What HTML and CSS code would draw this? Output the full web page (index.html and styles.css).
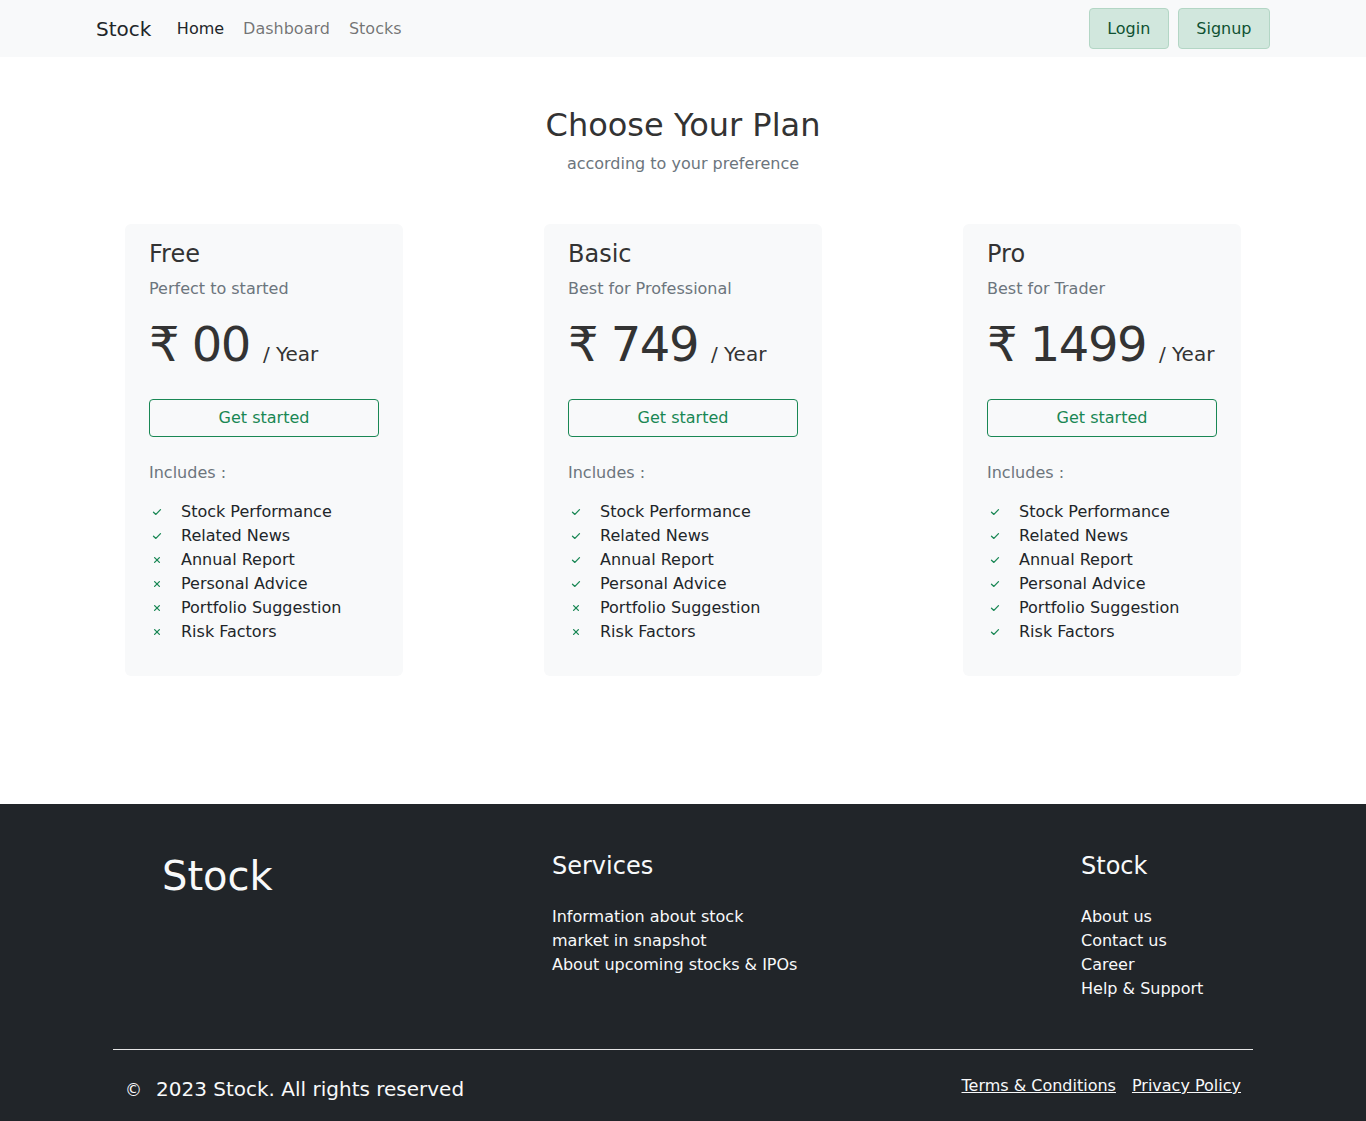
FILE: index.html
```html
<!DOCTYPE html>
<html lang="en">
<head>
<meta charset="utf-8">
<title>Stock - Plans</title>
<link rel="stylesheet" href="styles.css">
</head>
<body>
<nav class="navbar">
  <div class="nav-left">
    <a class="brand" href="#">Stock</a>
    <a class="nav-link active" href="#">Home</a>
    <a class="nav-link" href="#">Dashboard</a>
    <a class="nav-link" href="#">Stocks</a>
  </div>
  <div class="nav-right">
    <button class="btn-soft">Login</button>
    <button class="btn-soft">Signup</button>
  </div>
</nav>

<main class="plans">
  <header class="plans-head">
    <h2 class="plans-title">Choose Your Plan</h2>
    <p class="plans-sub">according to your preference</p>
  </header>

  <div class="cards">
    <div class="card">
      <h3 class="card-title">Free</h3>
      <p class="card-sub">Perfect to started</p>
      <div class="price"><span class="amount">₹ 00</span><span class="per">/ Year</span></div>
      <button class="btn-outline">Get started</button>
      <p class="includes">Includes :</p>
      <ul class="features">
        <li><svg class="ic" viewBox="0 0 10 10"><polyline points="1.5,5.2 3.9,7.4 8.5,2.6"/></svg>Stock Performance</li>
        <li><svg class="ic" viewBox="0 0 10 10"><polyline points="1.5,5.2 3.9,7.4 8.5,2.6"/></svg>Related News</li>
        <li><svg class="ic" viewBox="0 0 10 10"><path d="M2.6 2.6L7.4 7.4M7.4 2.6L2.6 7.4"/></svg>Annual Report</li>
        <li><svg class="ic" viewBox="0 0 10 10"><path d="M2.6 2.6L7.4 7.4M7.4 2.6L2.6 7.4"/></svg>Personal Advice</li>
        <li><svg class="ic" viewBox="0 0 10 10"><path d="M2.6 2.6L7.4 7.4M7.4 2.6L2.6 7.4"/></svg>Portfolio Suggestion</li>
        <li><svg class="ic" viewBox="0 0 10 10"><path d="M2.6 2.6L7.4 7.4M7.4 2.6L2.6 7.4"/></svg>Risk Factors</li>
      </ul>
    </div>

    <div class="card">
      <h3 class="card-title">Basic</h3>
      <p class="card-sub">Best for Professional</p>
      <div class="price"><span class="amount">₹ 749</span><span class="per">/ Year</span></div>
      <button class="btn-outline">Get started</button>
      <p class="includes">Includes :</p>
      <ul class="features">
        <li><svg class="ic" viewBox="0 0 10 10"><polyline points="1.5,5.2 3.9,7.4 8.5,2.6"/></svg>Stock Performance</li>
        <li><svg class="ic" viewBox="0 0 10 10"><polyline points="1.5,5.2 3.9,7.4 8.5,2.6"/></svg>Related News</li>
        <li><svg class="ic" viewBox="0 0 10 10"><polyline points="1.5,5.2 3.9,7.4 8.5,2.6"/></svg>Annual Report</li>
        <li><svg class="ic" viewBox="0 0 10 10"><polyline points="1.5,5.2 3.9,7.4 8.5,2.6"/></svg>Personal Advice</li>
        <li><svg class="ic" viewBox="0 0 10 10"><path d="M2.6 2.6L7.4 7.4M7.4 2.6L2.6 7.4"/></svg>Portfolio Suggestion</li>
        <li><svg class="ic" viewBox="0 0 10 10"><path d="M2.6 2.6L7.4 7.4M7.4 2.6L2.6 7.4"/></svg>Risk Factors</li>
      </ul>
    </div>

    <div class="card">
      <h3 class="card-title">Pro</h3>
      <p class="card-sub">Best for Trader</p>
      <div class="price"><span class="amount">₹ 1499</span><span class="per">/ Year</span></div>
      <button class="btn-outline">Get started</button>
      <p class="includes">Includes :</p>
      <ul class="features">
        <li><svg class="ic" viewBox="0 0 10 10"><polyline points="1.5,5.2 3.9,7.4 8.5,2.6"/></svg>Stock Performance</li>
        <li><svg class="ic" viewBox="0 0 10 10"><polyline points="1.5,5.2 3.9,7.4 8.5,2.6"/></svg>Related News</li>
        <li><svg class="ic" viewBox="0 0 10 10"><polyline points="1.5,5.2 3.9,7.4 8.5,2.6"/></svg>Annual Report</li>
        <li><svg class="ic" viewBox="0 0 10 10"><polyline points="1.5,5.2 3.9,7.4 8.5,2.6"/></svg>Personal Advice</li>
        <li><svg class="ic" viewBox="0 0 10 10"><polyline points="1.5,5.2 3.9,7.4 8.5,2.6"/></svg>Portfolio Suggestion</li>
        <li><svg class="ic" viewBox="0 0 10 10"><polyline points="1.5,5.2 3.9,7.4 8.5,2.6"/></svg>Risk Factors</li>
      </ul>
    </div>
  </div>
</main>

<footer class="footer">
  <div class="footer-inner">
    <div class="footer-cols">
      <div class="f-brand">Stock</div>
      <div class="f-col">
        <h4 class="f-head">Services</h4>
        <a class="f-link" href="#">Information about stock<br>market in snapshot</a>
        <a class="f-link" href="#">About upcoming stocks &amp; IPOs</a>
      </div>
      <div class="f-col">
        <h4 class="f-head">Stock</h4>
        <a class="f-link" href="#">About us</a>
        <a class="f-link" href="#">Contact us</a>
        <a class="f-link" href="#">Career</a>
        <a class="f-link" href="#">Help &amp; Support</a>
      </div>
    </div>
    <hr class="f-rule">
    <div class="f-bottom">
      <p class="copy"><span class="copy-sign">©</span>2023 Stock. All rights reserved</p>
      <div class="legal">
        <a href="#">Terms &amp; Conditions</a>
        <a href="#">Privacy Policy</a>
      </div>
    </div>
  </div>
</footer>
</body>
</html>
```
FILE: styles.css
```css
* { box-sizing: border-box; }

html, body {
  margin: 0;
  padding: 0;
}

body {
  font-family: "DejaVu Sans", "Noto Sans", sans-serif;
  font-size: 16px;
  line-height: 24px;
  color: #212529;
  background: #fff;
}

a { text-decoration: none; }

/* Navbar */
.navbar {
  display: flex;
  align-items: center;
  justify-content: space-between;
  background: #f8f9fa;
  padding: 8px 96px;
  height: 57px;
}

.nav-left {
  display: flex;
  align-items: center;
}

.brand {
  font-size: 20px;
  line-height: 30px;
  color: #212529;
  margin-right: 16px;
}

.nav-link {
  padding: 8px 9.5px;
  color: rgba(0, 0, 0, 0.55);
  font-size: 16px;
}

.nav-link.active { color: #212529; }

.nav-right {
  display: flex;
  gap: 9px;
}

.btn-soft {
  font-family: inherit;
  font-size: 16px;
  line-height: 24px;
  padding: 7.5px 17.5px;
  background: #d1e7dd;
  color: #0f5132;
  border: 1px solid #b3d6c5;
  border-radius: 4px;
}

/* Plans */
.plans {
  width: 1116px;
  margin: 0 auto;
  padding-top: 49px;
  padding-bottom: 128px;
}

.plans-head { text-align: center; }

.plans-title {
  margin: 0;
  font-size: 32px;
  line-height: 38px;
  font-weight: 400;
  color: #333;
}

.plans-sub {
  margin: 8px 0 0;
  color: #6c757d;
}

.cards {
  display: flex;
  justify-content: space-between;
  margin-top: 48px;
}

.card {
  width: 278px;
  background: #f8f9fa;
  border-radius: 6px;
  padding: 16px 24px 16px;
}

.card-title {
  margin: 0 0 8px;
  font-size: 24px;
  line-height: 29px;
  font-weight: 400;
  color: #333;
}

.card-sub {
  margin: 0 0 14px;
  color: #6c757d;
}

.price {
  display: flex;
  align-items: baseline;
  white-space: nowrap;
  color: #333;
  height: 58px;
}

.amount {
  font-size: 48px;
  line-height: 58px;
  letter-spacing: -1.5px;
}

.per {
  font-size: 20px;
  margin-left: 13px;
}

.btn-outline {
  display: block;
  width: 100%;
  margin-top: 26px;
  font-family: inherit;
  font-size: 16px;
  line-height: 24px;
  padding: 6px 12px;
  background: transparent;
  color: #198754;
  border: 1px solid #198754;
  border-radius: 4px;
}

.includes {
  margin: 24px 0 15px;
  color: #6c757d;
}

.features {
  list-style: none;
  margin: 0 0 16px;
  padding: 0;
}

.features li {
  display: flex;
  align-items: center;
  height: 24px;
}

.ic {
  width: 10px;
  height: 10px;
  margin: 0 19px 0 3px;
  fill: none;
  stroke: #198754;
  stroke-width: 1.3;
  stroke-linecap: round;
  stroke-linejoin: round;
}

/* Footer */
.footer {
  background: #212529;
  color: #f8f9fa;
  padding-top: 48px;
  padding-bottom: 17px;
}

.footer-inner {
  width: 1140px;
  margin: 0 auto;
}

.footer-cols {
  display: grid;
  grid-template-columns: 390px 529px 1fr;
  padding-left: 49px;
}

.f-brand {
  font-size: 40px;
  line-height: 48px;
  color: #f8f9fa;
}

.f-col {
  display: flex;
  flex-direction: column;
}

.f-head {
  margin: 0 0 24px;
  font-size: 24px;
  line-height: 29px;
  font-weight: 400;
  color: #f8f9fa;
}

.f-link {
  color: #f8f9fa;
  line-height: 24px;
}

.f-rule {
  margin: 48px 0 24px;
  border: 0;
  border-top: 1px solid #e5e5e5;
}

.f-bottom {
  display: flex;
  justify-content: space-between;
  align-items: flex-start;
  padding: 0 12px;
}

.copy {
  margin: 0;
  font-size: 20px;
  line-height: 30px;
  color: #f8f9fa;
}

.copy-sign {
  font-size: 17px;
  margin-right: 14px;
}

.legal {
  display: flex;
  gap: 16px;
}

.legal a {
  color: #f8f9fa;
  text-decoration: underline;
  line-height: 24px;
}
```
